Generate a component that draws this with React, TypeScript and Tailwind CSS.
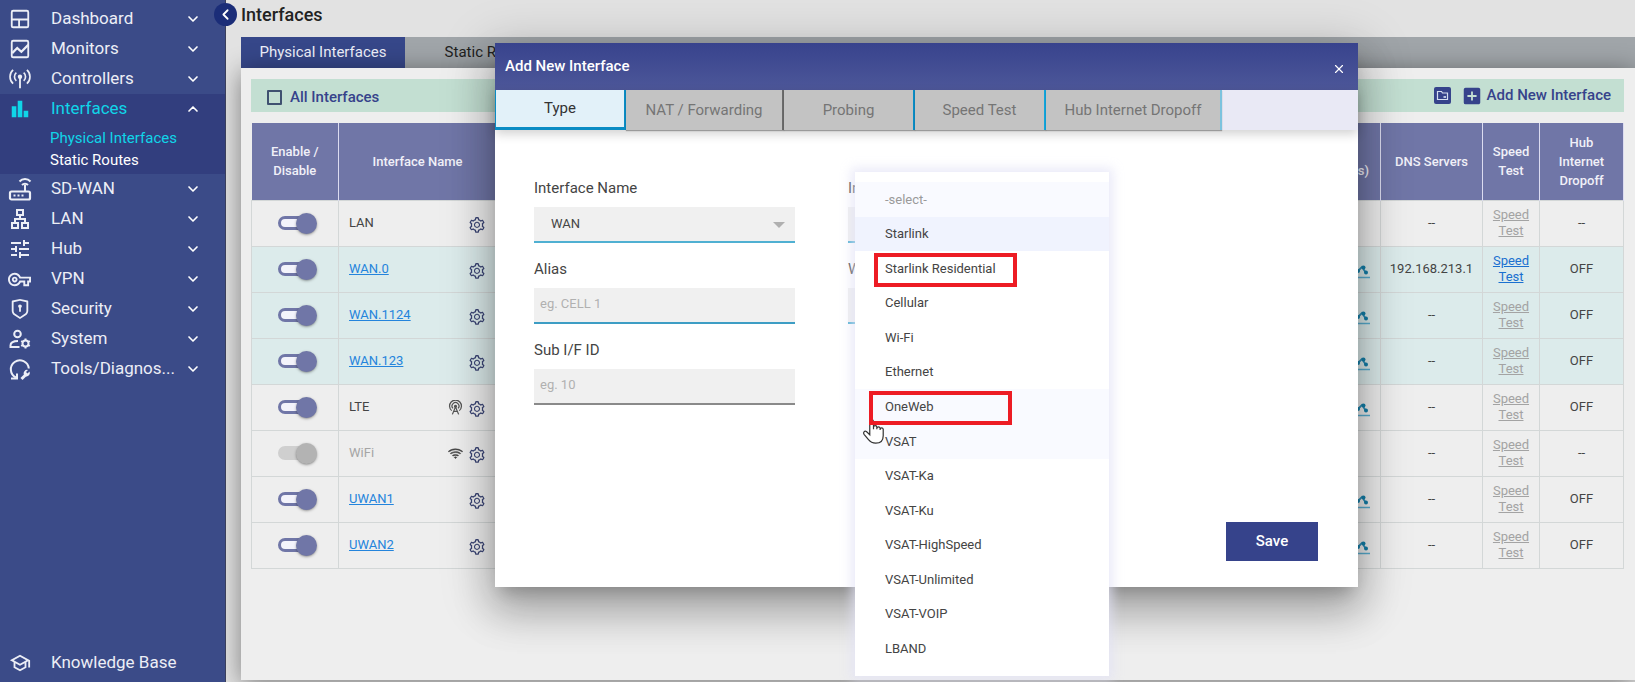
import React, { useState } from 'react';
import clsx from 'clsx';
import { ChevronDown, ChevronLeft, ChevronUp, X } from 'lucide-react';
import { MdAddBox, MdOutlineLan, MdOutlineSchool, MdOutlineVpnKey, MdTune } from 'react-icons/md';
import { RiShieldKeyholeLine } from 'react-icons/ri';
import { AiOutlineSetting } from 'react-icons/ai';
import { BsWifi } from 'react-icons/bs';

const stroke = { fill: 'none', stroke: 'currentColor', strokeWidth: 2 };

const DashboardIcon = () => (
    <svg viewBox="0 0 24 24" className="size-[22px]" {...stroke}>
        <rect x="3" y="3" width="18" height="18" rx="1.5" />
        <path d="M3 12.5h18M11 12.5V21" />
    </svg>
);

const MonitorsIcon = () => (
    <svg viewBox="0 0 24 24" className="size-[22px]" {...stroke}>
        <rect x="3" y="3" width="18" height="18" rx="1.5" />
        <path d="M3.5 16.5l5.5-5.5 4.5 4 7.5-7.5" strokeWidth="2.4" />
    </svg>
);

const ControllersIcon = () => (
    <svg viewBox="0 0 24 24" className="size-[22px]" {...stroke}>
        <circle cx="12" cy="9.5" r="2.4" fill="currentColor" stroke="none" />
        <path d="M12 10v12" />
        <path d="M8 14a6 6 0 0 1 0-9M16 14a6 6 0 0 0 0-9" strokeWidth="1.8" />
        <path d="M4.500 17a10 10 0 0 1 0-15M19.500 17a10 10 0 0 0 0-15" strokeWidth="1.8" />
    </svg>
);

const BarsIcon = () => (
    <svg viewBox="0 0 24 24" className="size-[22px]" fill="currentColor">
        <path d="M3 9h5v12H3zM9.500 3h5v18h-5zM16 14h5v7h-5z" />
    </svg>
);

const RouterIcon = () => (
    <svg viewBox="0 0 24 24" className="size-6" {...stroke}>
        <rect x="2" y="14.500" width="20" height="8" rx="1.500" strokeWidth="2.200" />
        <path d="M17 15V8" />
        <path d="M11.500 4.500a7.500 7.500 0 0 1 11 0" />
        <path d="M14 8a4.200 4.200 0 0 1 6 0" />
        <path d="M5.500 18.500h2M9.500 18.500h2M13.500 18.500h2" />
    </svg>
);

const SystemIcon = () => (
    <svg viewBox="0 0 24 24" className="size-6" {...stroke}>
        <circle cx="9.500" cy="7" r="3.300" />
        <path d="M11.500 20H2.500v-1.500c0-3 3-4.500 7.500-4.500" />
        <circle cx="17.500" cy="16.500" r="3" />
        <path d="M17.500 11.500v2M17.500 19.500v2M13.200 14l1.700 1M20.100 18l1.700 1M13.200 19l1.700-1M20.100 15l1.700-1" />
    </svg>
);

const ToolsIcon = () => (
    <svg viewBox="0 0 24 24" className="size-6" {...stroke}>
        <path d="M8 20.500A9 9 0 1 1 20.800 11.500" />
        <path d="M3 21.500h6v-5" />
        <path d="M13.500 22l4-4" strokeWidth="3" />
        <path d="M21.500 14.500l-2 2-1.500-1.500 2-2a3.500 3.500 0 0 0-4 5l2 1.500a3.500 3.500 0 0 0 3.500-5z" fill="currentColor" stroke="none" />
    </svg>
);

const TowerIcon = () => (
    <svg viewBox="0 0 24 24" className="size-[15px] text-[#555]" {...stroke}>
        <path d="M6 17a9.500 9.500 0 1 1 12 0M8 13.500a5.500 5.500 0 1 1 8 0" />
        <circle cx="12" cy="10" r="1.500" fill="currentColor" />
        <path d="M12 11l-5 12M12 11l5 12M9 18l6 0" />
    </svg>
);

const ChartIcon = () => (
    <svg viewBox="0 0 24 16" className="mt-1 ml-auto h-4 w-6">
        <path d="M1 11l6-7 4 5 5-5 4 6" fill="none" stroke="#2f8fb8" strokeWidth="1.800" />
        <path d="M0 14.500h24" stroke="#5aaed0" strokeWidth="1.500" />
        <g fill="#1480ab">
            <circle cx="7" cy="4" r="2" />
            <circle cx="12" cy="8" r="2" />
            <circle cx="17.500" cy="4.500" r="2" />
            <circle cx="20" cy="9.500" r="2" />
        </g>
    </svg>
);

const HandCursor = () => (
    <svg viewBox="0 0 24 30" className="pointer-events-none absolute top-[245px] left-[7px] h-[28px] w-[23px]">
        <path
            d="M8 19V5a2 2 0 0 1 4 0v8-2a1.800 1.800 0 0 1 3.600 0v2-1a1.800 1.800 0 0 1 3.500 0v2-1a1.700 1.700 0 0 1 3.300 0v7c0 5-3 8-8 8-4 0-6-1.500-8-4l-4.500-5.500c-1.500-2 .5-4 2.500-3L8 19z"
            fill="#fff"
            stroke="#333"
            strokeWidth="1.300"
        />
    </svg>
);

const navItems = [
    { label: 'Dashboard', icon: <DashboardIcon /> },
    { label: 'Monitors', icon: <MonitorsIcon /> },
    { label: 'Controllers', icon: <ControllersIcon /> },
    { label: 'Interfaces', icon: <BarsIcon />, children: ['Physical Interfaces', 'Static Routes'] },
    { label: 'SD-WAN', icon: <RouterIcon /> },
    { label: 'LAN', icon: <MdOutlineLan size={24} /> },
    { label: 'Hub', icon: <MdTune size={24} /> },
    { label: 'VPN', icon: <MdOutlineVpnKey size={23} /> },
    { label: 'Security', icon: <RiShieldKeyholeLine size={22} /> },
    { label: 'System', icon: <SystemIcon /> },
    { label: 'Tools/Diagnos...', icon: <ToolsIcon /> },
];

const rows = [
    { name: 'LAN', chart: false, dns: '--', dropoff: '--' },
    { name: 'WAN.0', link: true, tinted: true, chart: true, dns: '192.168.213.1', testable: true, dropoff: 'OFF' },
    { name: 'WAN.1124', link: true, tinted: true, chart: true, dns: '--', dropoff: 'OFF' },
    { name: 'WAN.123', link: true, tinted: true, chart: true, dns: '--', dropoff: 'OFF' },
    { name: 'LTE', chart: true, dns: '--', dropoff: 'OFF', badge: <TowerIcon /> },
    {
        name: 'WiFi',
        disabled: true,
        chart: false,
        dns: '--',
        dropoff: '--',
        badge: <BsWifi size={15} strokeWidth={0.6} className="text-[#444]" />,
    },
    { name: 'UWAN1', link: true, chart: true, dns: '--', dropoff: 'OFF' },
    { name: 'UWAN2', link: true, chart: true, dns: '--', dropoff: 'OFF' },
];

const types = [
    '-select-',
    'Starlink',
    'Starlink Residential',
    'Cellular',
    'Wi-Fi',
    'Ethernet',
    'OneWeb',
    'VSAT',
    'VSAT-Ka',
    'VSAT-Ku',
    'VSAT-HighSpeed',
    'VSAT-Unlimited',
    'VSAT-VOIP',
    'LBAND',
];

const Sidebar = () => (
    <aside className="relative flex w-[226px] shrink-0 flex-col border-r border-[#3a3f5c] bg-[#3b4b88] py-1 text-[17px] text-[#eceef6]">
        <nav>
            {navItems.map(({ label, icon, children }) => (
                <div key={label} className={clsx(children && 'bg-[#323e7e]')}>
                    <button
                        type="button"
                        aria-expanded={!!children}
                        className={clsx('flex h-[30px] w-full items-center text-left', children && 'text-[#10d5e8]')}
                    >
                        <span className="flex w-[39px] justify-center">{icon}</span>
                        <span className="ml-3 flex-1">{label}</span>
                        {children ? (
                            <ChevronUp size={16} strokeWidth={2.5} className="mr-6 text-white" />
                        ) : (
                            <ChevronDown size={16} strokeWidth={2.5} className="mr-6 text-white" />
                        )}
                    </button>
                    {children && (
                        <div className="flex flex-col pt-[3px] pb-[3px] pl-[50px] text-[15px] leading-[22px]">
                            {children.map((child, i) => (
                                <a key={child} href="#" className={i === 0 ? 'text-[#10d5e8]' : 'text-white'}>
                                    {child}
                                </a>
                            ))}
                        </div>
                    )}
                </div>
            ))}
        </nav>
        <a href="#" className="mt-auto flex h-[30px] items-center">
            <span className="flex w-[39px] justify-center">
                <MdOutlineSchool size={22} />
            </span>
            <span className="ml-3">Knowledge Base</span>
        </a>
        <button
            type="button"
            aria-label="Collapse menu"
            className="absolute top-[3px] -right-3 z-10 flex size-[23px] items-center justify-center rounded-full bg-[#1b2d78] text-white"
        >
            <ChevronLeft size={17} strokeWidth={2.5} />
        </button>
    </aside>
);

const Toggle = ({ name, disabled }: { name: string; disabled?: boolean }) => (
    <label className="relative mx-auto flex h-[22px] w-[39px] items-center">
        <input type="checkbox" aria-label={`Enable ${name}`} defaultChecked disabled={disabled} className="peer sr-only" />
        <span className="h-[14px] w-[34px] rounded-full border-[3px] border-[#7076a7] bg-[#f3f3fb] peer-disabled:border-[#cfcfcf] peer-disabled:bg-[#cfcfcf]" />
        <span className="absolute right-0 size-[21px] rounded-full bg-[#7076a7] shadow-sm shadow-black/30 peer-disabled:bg-[#b3b3b3]" />
    </label>
);

const InterfaceTable = () => (
    <table className="mt-[11px] w-full table-fixed border-collapse text-center text-[13px] text-[#444]">
        <colgroup>
            <col className="w-[87px]" />
            <col className="w-[158px]" />
            <col />
            <col className="w-[102px]" />
            <col className="w-[57px]" />
            <col className="w-[84px]" />
        </colgroup>
        <thead>
            <tr className="h-[77px] bg-[#7076a7] leading-[19px] text-[#f0f0f8] [&>th]:border-r [&>th]:border-[#dcdcf0] [&>th]:font-medium">
                <th>
                    Enable /<br />
                    Disable
                </th>
                <th>Interface Name</th>
                <th className="pr-[11px] text-right">
                    <br />
                    s)
                </th>
                <th>DNS Servers</th>
                <th>
                    Speed
                    <br />
                    Test
                </th>
                <th>
                    Hub
                    <br />
                    Internet
                    <br />
                    Dropoff
                </th>
            </tr>
        </thead>
        <tbody>
            {rows.map((row) => (
                <tr
                    key={row.name}
                    className={clsx('h-[46px] [&>td]:border [&>td]:border-[#d3d7d7]', row.tinted && 'bg-[#dcebeb]')}
                >
                    <td className="pl-1">
                        <Toggle name={row.name} disabled={row.disabled} />
                    </td>
                    <td>
                        <div className="flex items-center gap-[5px] pr-[10px] pl-[10px]">
                            {row.link ? (
                                <a href="#" className="mr-auto text-[#2484dc] underline">
                                    {row.name}
                                </a>
                            ) : (
                                <span className={clsx('mr-auto', row.disabled && 'text-[#a5a5a5]')}>{row.name}</span>
                            )}
                            {row.badge}
                            <button type="button" aria-label={`${row.name} settings`} className="pt-[3px] text-[#3c4676]">
                                <AiOutlineSetting size={18} />
                            </button>
                        </div>
                    </td>
                    <td className="pr-[10px]">{row.chart && <ChartIcon />}</td>
                    <td>{row.dns}</td>
                    <td className="leading-4">
                        <a href="#" className={clsx('underline', row.testable ? 'text-[#1a70d0]' : 'text-[#a3a3a3]')}>
                            Speed
                            <br />
                            Test
                        </a>
                    </td>
                    <td>{row.dropoff}</td>
                </tr>
            ))}
        </tbody>
    </table>
);

const fieldClass = 'h-9 w-full appearance-none rounded-none bg-[#f0f0f0] border-b-2 text-[13px] outline-none';

const TypeMenu = () => (
    <ul
        role="listbox"
        aria-label="Interface types"
        className="absolute top-[129px] left-[360px] z-20 flex h-[504px] w-[254px] flex-col bg-white py-[10px] text-[13px] text-[#444] shadow-[0_0_10px_4px_rgba(225,225,245,0.7)]"
    >
        {types.map((type) => (
            <li
                key={type}
                role="option"
                aria-selected={type === 'Starlink'}
                className={clsx(
                    'relative flex flex-1 items-center pl-[30px]',
                    type === '-select-' && 'bg-[#f9faff] text-[#9a9a9a]',
                    type === 'Starlink' && 'bg-[#f0f3fe]',
                    (type === 'OneWeb' || type === 'VSAT') && 'bg-[#f9faff]',
                )}
            >
                {type}
                {type === 'Starlink Residential' && (
                    <span className="absolute top-[2px] left-[19px] h-[34px] w-[143px] border-4 border-[#ed1c24]" />
                )}
                {type === 'OneWeb' && (
                    <span className="absolute top-[2px] left-[14px] z-10 h-[34px] w-[143px] border-4 border-[#ed1c24]" />
                )}
            </li>
        ))}
        <HandCursor />
    </ul>
);

const modalTabs = [
    { label: 'NAT / Forwarding', className: 'w-[158px] border-[#6b6b6b]' },
    { label: 'Probing', className: 'w-[131px] border-[#0a8cc4]' },
    { label: 'Speed Test', className: 'w-[131px] border-[#12a5dc]' },
    { label: 'Hub Internet Dropoff', className: 'w-[176px] border-[#7cc3de]' },
];

const AddInterfaceModal = () => {
    const [alias, setAlias] = useState('');
    const [subId, setSubId] = useState('');

    return (
        <div className="absolute inset-0 left-[218px] flex items-start justify-center pt-[43px]">
            <div
                role="dialog"
                aria-label="Add New Interface"
                className="relative flex min-h-[544px] w-full max-w-[863px] flex-col bg-white shadow-[0_11px_15px_-7px_rgba(0,0,0,0.2),0_24px_38px_3px_rgba(0,0,0,0.2),0_9px_46px_8px_rgba(0,0,0,0.18)]"
            >
                <div className="flex h-[47px] items-center justify-between bg-linear-to-b from-[#38438d] to-[#4d5799] pr-3 pl-[10px] text-white">
                    <h2 className="text-[15px] font-medium">Add New Interface</h2>
                    <button type="button" aria-label="Close" className="pt-1">
                        <X size={14} />
                    </button>
                </div>
                <div
                    role="tablist"
                    className="flex h-10 bg-[#e9e9f5] text-[15px] text-[#757575] shadow-[0_4px_10px_rgba(0,0,0,0.18)]"
                >
                    <button
                        type="button"
                        role="tab"
                        className="w-[131px] border-r-2 border-b-[3px] border-l border-[#0a8cc4] bg-[#e2f1f9] text-[#333]"
                    >
                        Type
                    </button>
                    {modalTabs.map((tab) => (
                        <button
                            key={tab.label}
                            type="button"
                            role="tab"
                            className={clsx('border-r-2 bg-[#c3c3c3] shadow-[0_1px_1px_rgba(0,0,0,0.3)]', tab.className)}
                        >
                            {tab.label}
                        </button>
                    ))}
                </div>

                <form className="grid grid-cols-[261px_261px] gap-x-[53px] pt-12 pl-[39px] text-[15px] text-[#444]">
                    <div className="flex flex-col gap-4">
                        <div className="flex flex-col gap-[9px]">
                            <label htmlFor="if-name" className="leading-5">
                                Interface Name
                            </label>
                            <div className="relative">
                                <select id="if-name" className={clsx(fieldClass, 'border-[#4fb0d2] pl-[17px] text-[#444]')}>
                                    <option>WAN</option>
                                </select>
                                <svg viewBox="0 0 12 6" className="absolute top-[15px] right-[10px] h-[6px] w-3">
                                    <path d="M0 0h12l-6 6z" fill="#b0b0b0" />
                                </svg>
                            </div>
                        </div>
                        <div className="flex flex-col gap-[9px]">
                            <label htmlFor="alias" className="leading-5">
                                Alias
                            </label>
                            <input
                                id="alias"
                                value={alias}
                                onChange={(e) => setAlias(e.target.value)}
                                placeholder="eg. CELL 1"
                                className={clsx(fieldClass, 'border-[#3d9dc4] pb-1 pl-[6px] placeholder:text-[#b0b0b0]')}
                            />
                        </div>
                        <div className="flex flex-col gap-[9px]">
                            <label htmlFor="sub-id" className="leading-5">
                                Sub I/F ID
                            </label>
                            <input
                                id="sub-id"
                                value={subId}
                                onChange={(e) => setSubId(e.target.value)}
                                placeholder="eg. 10"
                                className={clsx(fieldClass, 'border-[#8a8a8a] pb-1 pl-[6px] placeholder:text-[#b0b0b0]')}
                            />
                        </div>
                    </div>
                    <div className="flex flex-col gap-4">
                        <div className="flex flex-col gap-[9px]">
                            <label htmlFor="if-type" className="leading-5">
                                In
                            </label>
                            <select id="if-type" className={clsx(fieldClass, 'border-[#4fb0d2]')} />
                        </div>
                        <div className="flex flex-col gap-[9px]">
                            <label htmlFor="wan-profile" className="leading-5">
                                W
                            </label>
                            <select id="wan-profile" className={clsx(fieldClass, 'border-[#4fb0d2]')} />
                        </div>
                    </div>
                </form>

                <button
                    type="button"
                    className="mt-auto mr-10 mb-[26px] h-[39px] w-[92px] self-end bg-[#36438b] text-[15px] font-medium text-white"
                >
                    Save
                </button>
                <TypeMenu />
            </div>
        </div>
    );
};

const App = () => (
    <div className="relative flex min-h-screen overflow-hidden bg-[#e2e2e2] font-['Roboto',sans-serif]">
        <Sidebar />
        <main className="flex min-w-0 flex-1 flex-col pb-[2px] pl-[15px]">
            <h1 className="flex h-[37px] items-start pt-[3px] text-lg leading-6 font-medium text-[#222]">Interfaces</h1>
            <div className="flex h-[31px] bg-[#a0a5a9] text-[15px] text-[#222]">
                <button type="button" className="w-[164px] bg-[#364789] text-[#eef0fa]">
                    Physical Interfaces
                </button>
                <button type="button" className="w-[168px]">
                    Static Routes
                </button>
            </div>
            <section className="flex-1 bg-[#eeeeee] pt-[11px] pr-[11px] pl-[10px] shadow-[0_4px_24px_rgba(0,0,0,0.45)]">
                <div className="flex h-[33px] items-center bg-[#c3dfd2] text-[15px] font-medium text-[#36438b]">
                    <label className="flex items-center gap-2 pt-1 pl-4">
                        <input
                            type="checkbox"
                            className="size-[15px] appearance-none rounded-[1px] border-2 border-[#3f5170]"
                        />
                        All Interfaces
                    </label>
                    <button type="button" aria-label="Open folder" className="ml-auto rounded-[2px] bg-[#36438b]">
                        <svg viewBox="0 0 17 17" className="size-[17px]">
                            <path d="M3.500 4.500h4l1 1.500h5v6.500h-10z" fill="none" stroke="#d5def0" strokeWidth="1.200" />
                            <path d="M9.500 9h2.500v2H9.500z" fill="#b9c4e0" />
                        </svg>
                    </button>
                    <button type="button" className="mr-[13px] ml-[10px] flex items-center gap-1">
                        <MdAddBox size={22} />
                        Add New Interface
                    </button>
                </div>
                <InterfaceTable />
            </section>
        </main>
        <AddInterfaceModal />
    </div>
);

export default App;
